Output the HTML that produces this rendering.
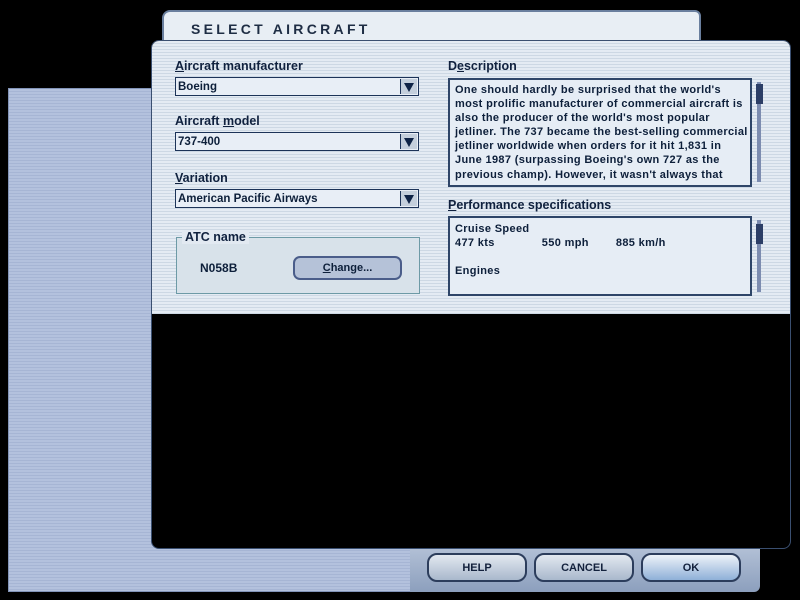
<!DOCTYPE html>
<html><head><style>
body{margin:0;width:800px;height:600px;background:#000;position:relative;overflow:hidden;font-family:"Liberation Sans",Arial,sans-serif;font-weight:bold;color:#0d1f3a}
.abs{position:absolute}
.stripe{background:repeating-linear-gradient(#e4ebf3 0 2px,#cdd8e4 2px 3px)}
#left{left:8px;top:88px;width:402px;height:502px;background:repeating-linear-gradient(#b3c1dd 0 2px,#a6b5d4 2px 3px);border:1px solid #8294b8}
#tab{left:162px;top:10px;width:535px;height:34px;background:#e8eef4;border:2px solid #6a7f9e;border-radius:8px 6px 0 0}
#tab span{position:absolute;left:27px;top:9px;font-size:14px;letter-spacing:3.3px;color:#1e2d44}
#main{left:151px;top:40px;width:638px;height:507px;border:1px solid #3a4f70;border-radius:8px;background:#000;overflow:hidden}
#top{left:0;top:0;width:638px;height:273px}
.lbl{font-size:12.5px;color:#10213e}
.dd{width:244px;height:19px;border:1px solid #1c3358;background:#e8eef6;font-size:11.5px;line-height:19px;padding-left:2px;box-sizing:border-box}
.arr{position:absolute;right:1px;top:1px;width:16px;height:15px;background:#c4cfdc;border-left:1px solid #1c3358}
.arr:after{content:"";position:absolute;left:3px;top:4px;border-left:5px solid transparent;border-right:5px solid transparent;border-top:9px solid #0e2346}
.box{border:2px solid #2e4568;background:#e6edf5;font-size:11px;line-height:14.1px;padding:2px 5px;box-sizing:border-box;white-space:nowrap;letter-spacing:0.35px;overflow:hidden}
.sb{width:8px;background:#5c6f98}
.btn{top:553px;width:100px;height:29px;border:2px solid #2c3d5c;border-radius:10px;box-sizing:border-box;background:linear-gradient(#e2e8f0,#a9b8cc);font-size:11px;text-align:center;line-height:27px;color:#13213c}
</style></head><body>
<div class="abs" id="left"></div>
<div class="abs" style="left:410px;top:548px;width:350px;height:44px;background:linear-gradient(#b2c0d6,#8c9fbd);border-radius:0 0 6px 0"></div>
<div class="abs btn" style="left:427px">HELP</div>
<div class="abs btn" style="left:534px">CANCEL</div>
<div class="abs btn" style="left:641px;background:linear-gradient(#edf2f8,#8fb0d8)">OK</div>
<div class="abs" id="tab"><span>SELECT AIRCRAFT</span></div>
<div class="abs" id="main">
<div class="abs stripe" id="top"></div>
</div>
<div class="abs lbl" style="left:175px;top:59px"><u>A</u>ircraft manufacturer</div>
<div class="abs dd" style="left:175px;top:77px">Boeing<div class="arr"></div></div>
<div class="abs lbl" style="left:175px;top:114px">Aircraft <u>m</u>odel</div>
<div class="abs dd" style="left:175px;top:132px">737-400<div class="arr"></div></div>
<div class="abs lbl" style="left:175px;top:171px"><u>V</u>ariation</div>
<div class="abs dd" style="left:175px;top:189px">American Pacific Airways<div class="arr"></div></div>
<div class="abs" style="left:176px;top:237px;width:244px;height:57px;border:1px solid #6d9aa6;background:#d8e2ea;box-sizing:border-box"></div>
<div class="abs lbl" style="left:182px;top:230px;background:#e2e9f1;padding:0 3px">ATC name</div>
<div class="abs" style="left:200px;top:261px;font-size:12px">N058B</div>
<div class="abs" style="left:293px;top:256px;width:109px;height:24px;border:2px solid #4a5d8a;border-radius:7px;background:#b5c2d8;box-sizing:border-box;font-size:11px;text-align:center;line-height:20px"><u>C</u>hange...</div>
<div class="abs lbl" style="left:448px;top:59px">D<u>e</u>scription</div>
<div class="abs box" style="left:448px;top:78px;width:304px;height:109px;padding-top:3px">One should hardly be surprised that the world's<br>most prolific manufacturer of commercial aircraft is<br>also the producer of the world's most popular<br>jetliner. The 737 became the best-selling commercial<br>jetliner worldwide when orders for it hit 1,831 in<br>June 1987 (surpassing Boeing's own 727 as the<br>previous champ). However, it wasn't always that</div>
<div class="abs sb" style="left:757px;top:82px;height:100px;width:4px;background:#7c8cb0"></div>
<div class="abs sb" style="left:756px;top:84px;height:20px;width:7px;background:#2c3e66"></div>
<div class="abs lbl" style="left:448px;top:198px"><u>P</u>erformance specifications</div>
<div class="abs box" style="left:448px;top:216px;width:304px;height:80px;padding-top:4px">Cruise Speed<br>477 kts<span style="margin-left:47px">550 mph</span><span style="margin-left:27px">885 km/h</span><br><br>Engines</div>
<div class="abs sb" style="left:757px;top:220px;height:72px;width:4px;background:#7c8cb0"></div>
<div class="abs sb" style="left:756px;top:224px;height:20px;width:7px;background:#2c3e66"></div>
</body></html>
